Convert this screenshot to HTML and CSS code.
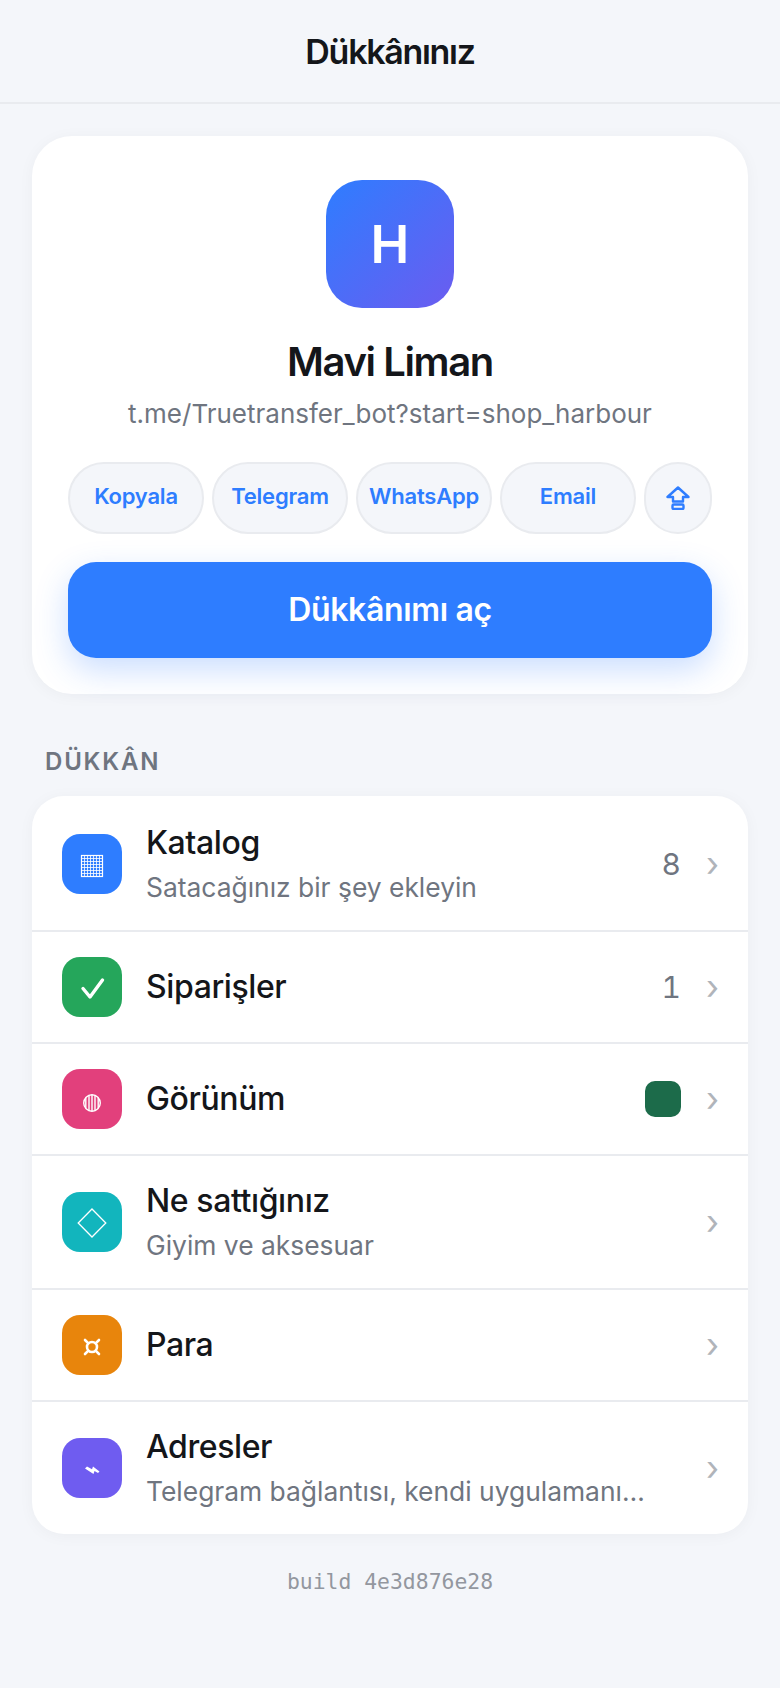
FILE: index.html
```html
<!DOCTYPE html>
<html lang="tr">
<head>
<meta charset="utf-8">
<title>Dükkânınız</title>
<link rel="stylesheet" href="styles.css">
</head>
<body>
<header class="topbar"><h1 class="topbar-title">Dükkânınız</h1></header>
<main class="content">
  <section class="hero">
    <div class="avatar">H</div>
    <h2 class="shop-name">Mavi Liman</h2>
    <div class="shop-url">t.me/Truetransfer_bot?start=shop_harbour</div>
    <div class="share">
      <button class="chip">Kopyala</button>
      <button class="chip">Telegram</button>
      <button class="chip">WhatsApp</button>
      <button class="chip">Email</button>
      <button class="chip chip-icon" aria-label="Paylaş">
        <svg class="share-svg" viewBox="0 0 24 24" width="24" height="24" fill="none" stroke="currentColor" stroke-width="2.4" stroke-linejoin="round"><path d="M12 1.5 1.5 11H7v4.500h10V11h5.500z"/><rect x="6.500" y="18.500" width="11" height="4.500" rx="1.200"/></svg>
      </button>
    </div>
    <button class="primary">Dükkânımı aç</button>
  </section>
  <div class="section-label">DÜKKÂN</div>
  <section class="list">
    <a class="row">
      <span class="ico ico-blue">
        <svg viewBox="0 0 60 60" width="60" height="60" fill="none" stroke="#fff"><rect x="19.500" y="21.500" width="21" height="21" stroke-width="1.200"/><path stroke-width="1" opacity=".8" d="M19 24.500h22M19 27.500h22M19 30.500h22M19 33.500h22M19 36.500h22M19 39.500h22M22.500 21v22M25.500 21v22M28.500 21v22M31.500 21v22M34.500 21v22M37.500 21v22"/></svg>
      </span>
      <span class="body"><span class="name">Katalog</span><span class="sub">Satacağınız bir şey ekleyin</span></span>
      <span class="val">8</span><span class="chev">›</span>
    </a>
    <a class="row">
      <span class="ico ico-green">
        <svg viewBox="0 0 60 60" width="60" height="60" fill="none" stroke="#fff" stroke-width="3.400" stroke-linecap="round" stroke-linejoin="round"><path d="M21 31.500 28 40 40.500 23"/></svg>
      </span>
      <span class="body"><span class="name">Siparişler</span></span>
      <span class="val">1</span><span class="chev">›</span>
    </a>
    <a class="row">
      <span class="ico ico-pink">
        <svg viewBox="0 0 60 60" width="60" height="60" fill="none" stroke="#fff"><circle cx="30" cy="34" r="8.300" stroke-width="1.400"/><path stroke-width="1.400" d="M23.800 28.500v11M27 26.500v15M30 26v16M33 26.500v15M36.200 28.500v11"/></svg>
      </span>
      <span class="body"><span class="name">Görünüm</span></span>
      <span class="swatch"></span><span class="chev">›</span>
    </a>
    <a class="row">
      <span class="ico ico-teal">
        <svg viewBox="0 0 60 60" width="60" height="60" fill="none" stroke="#fff" stroke-width="1.300"><path d="M30 17 43.800 31 30 45 16.200 31z"/></svg>
      </span>
      <span class="body"><span class="name">Ne sattığınız</span><span class="sub">Giyim ve aksesuar</span></span>
      <span class="chev">›</span>
    </a>
    <a class="row">
      <span class="ico ico-orange">
        <svg viewBox="0 0 60 60" width="60" height="60" fill="none" stroke="#fff" stroke-width="2.600" stroke-linecap="round"><circle cx="30" cy="32" r="5"/><path d="M23 25l3.400 3.400M37 25l-3.400 3.400M23 39l3.400-3.400M37 39l-3.400-3.400"/></svg>
      </span>
      <span class="body"><span class="name">Para</span></span>
      <span class="chev">›</span>
    </a>
    <a class="row">
      <span class="ico ico-violet">
        <svg viewBox="0 0 60 60" width="60" height="60" fill="#fff"><path d="M23 30.500 25 28.500 30 31.200 31 28.500 37.500 33.500 36 35 32.500 33 31.500 36z"/></svg>
      </span>
      <span class="body"><span class="name">Adresler</span><span class="sub">Telegram bağlantısı, kendi uygulamanı…</span></span>
      <span class="chev">›</span>
    </a>
  </section>
  <div class="build">build 4e3d876e28</div>
</main>
</body>
</html>
```
FILE: styles.css
```css
* { box-sizing: border-box; }
html, body { margin: 0; padding: 0; }
body {
  background: #f4f6fa;
  color: #14161a;
  font-family: Inter, "DejaVu Sans", sans-serif;
  min-height: 1688px;
}
.topbar {
  height: 104px;
  border-bottom: 2px solid #e9ebef;
  display: flex;
  align-items: center;
  justify-content: center;
}
.topbar-title { margin: 0; font-size: 34px; font-weight: 600; letter-spacing: -1.3px; }
.content { padding: 32px 32px 0; }
.hero {
  background: #fff;
  border-radius: 40px;
  padding: 44px 36px 36px;
  display: flex;
  flex-direction: column;
  align-items: center;
  box-shadow: 0 2px 16px rgba(20, 22, 26, 0.04);
}
.avatar {
  width: 128px;
  height: 128px;
  border-radius: 36px;
  background: linear-gradient(135deg, #2e7dff, #6b5cf0);
  color: #fff;
  font-size: 52px;
  font-weight: 600;
  display: flex;
  align-items: center;
  justify-content: center;
}
.shop-name { margin: 28px 0 0; font-size: 40px; line-height: 52px; font-weight: 600; letter-spacing: -1.4px; }
.shop-url { margin-top: 8px; font-size: 26px; line-height: 36px; color: #6f7580; }
.share { display: flex; gap: 8px; width: 100%; margin-top: 30px; }
.chip {
  flex: 1 1 0;
  min-width: 0;
  height: 72px;
  padding: 0 0 4px;
  border: 2px solid #e9ebef;
  border-radius: 36px;
  background: #f4f6fa;
  color: #2e7dff;
  font: 600 22px Inter, "DejaVu Sans", sans-serif;
  letter-spacing: -0.2px;
}
.chip-icon { flex: 0 0 68px; display: flex; align-items: center; justify-content: center; padding: 0; }
.share-svg { display: block; }
.primary {
  width: 100%;
  height: 96px;
  margin-top: 28px;
  padding: 0 0 2px;
  border: 0;
  border-radius: 28px;
  background: #2e7dff;
  color: #fff;
  font: 600 32px Inter, "DejaVu Sans", sans-serif;
  letter-spacing: -0.35px;
  box-shadow: 0 12px 32px rgba(46, 125, 255, 0.25);
}
.section-label {
  margin: 52px 0 0 13px;
  font-size: 24px;
  line-height: 32px;
  font-weight: 600;
  letter-spacing: 1.8px;
  color: #6f7580;
}
.list {
  margin-top: 18px;
  background: #fff;
  border-radius: 32px;
  overflow: hidden;
  box-shadow: 0 2px 16px rgba(20, 22, 26, 0.04);
}
.row {
  display: flex;
  align-items: center;
  gap: 24px;
  min-height: 112px;
  padding: 25px 30px;
  border-top: 2px solid #e9ebef;
}
.row:first-child { border-top-color: transparent; }
.ico {
  flex: none;
  width: 60px;
  height: 60px;
  border-radius: 18px;
  display: flex;
  align-items: center;
  justify-content: center;
}
.ico svg { display: block; }
.ico-blue { background: #2e7dff; }
.ico-green { background: #25a65b; }
.ico-pink { background: #e2407c; }
.ico-teal { background: #12b5bd; }
.ico-orange { background: #e8850c; }
.ico-violet { background: #6f5cf0; }
.body { flex: 1 1 0; min-width: 0; display: flex; flex-direction: column; gap: 6px; }
.name { font-size: 32px; line-height: 40px; font-weight: 450; letter-spacing: -0.4px; }
.sub { font-size: 26.4px; line-height: 36px; color: #6f7580; white-space: nowrap; overflow: hidden; }
.val { font-size: 30px; color: #6f7580; font-variant-numeric: tabular-nums; }
.swatch { width: 36px; height: 36px; border-radius: 10px; background: #1c6b4a; }
.chev { width: 12px; margin-left: 1px; font-size: 34px; line-height: 36px; color: #b0b4ba; }
.build {
  margin-top: 34px;
  text-align: center;
  font-family: "DejaVu Sans Mono", monospace;
  font-size: 21.4px;
  line-height: 28px;
  color: #93979f;
}
```
